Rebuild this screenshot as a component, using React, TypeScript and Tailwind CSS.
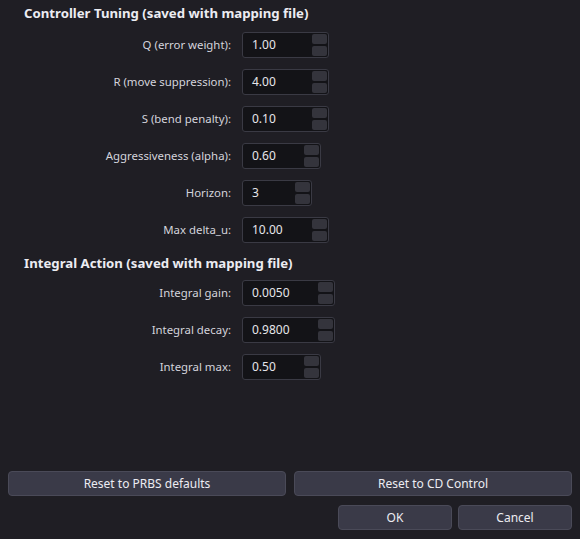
import React from 'react';

type Field = { label: string; value: string; width: string };

const tuningFields: Field[] = [
  { label: 'Q (error weight):', value: '1.00', width: 'w-[87px]' },
  { label: 'R (move suppression):', value: '4.00', width: 'w-[87px]' },
  { label: 'S (bend penalty):', value: '0.10', width: 'w-[87px]' },
  { label: 'Aggressiveness (alpha):', value: '0.60', width: 'w-[79px]' },
  { label: 'Horizon:', value: '3', width: 'w-[70px]' },
  { label: 'Max delta_u:', value: '10.00', width: 'w-[87px]' },
];

const integralFields: Field[] = [
  { label: 'Integral gain:', value: '0.0050', width: 'w-[93px]' },
  { label: 'Integral decay:', value: '0.9800', width: 'w-[93px]' },
  { label: 'Integral max:', value: '0.50', width: 'w-[79px]' },
];

function SpinBox({ value, width }: { value: string; width: string }) {
  return (
    <div className={`${width} h-[26px] flex rounded-[3px] border border-[#3a3a44] bg-[#131317]`}>
      <div className="flex-1 flex items-center pl-[9px] text-[12px] text-[#e6e6ea]">{value}</div>
      <div className="w-[15px] mr-[1px] py-[1px] flex flex-col gap-[2px]">
        <div className="flex-1 rounded-[2px] bg-[#34343c]" />
        <div className="flex-1 rounded-[2px] bg-[#34343c]" />
      </div>
    </div>
  );
}

function FormRow({ field }: { field: Field }) {
  return (
    <div className="flex items-center h-[26px]">
      <div className="w-[232px] text-right text-[11.4px] text-[#d4d4dc] pr-[1px]">{field.label}</div>
      <div className="ml-[10px]">
        <SpinBox value={field.value} width={field.width} />
      </div>
    </div>
  );
}

function DialogButton({ children, className = '' }: { children: React.ReactNode; className?: string }) {
  return (
    <button className={`h-[25px] rounded-[4px] border border-[#4a4a58] bg-[#3a3a48] text-[12px] text-[#ececf2] ${className}`}>
      {children}
    </button>
  );
}

export default function App() {
  return (
    <div
      className="w-[580px] h-[539px] bg-[#1f1e24] flex flex-col"
      style={{ fontFamily: '"Noto Sans", "Open Sans", sans-serif' }}
    >
      <div className="flex flex-col">
        {/* Controller tuning */}
        <h2 className="h-[28px] pl-[24px] pt-[3px] text-[13.2px] font-bold text-[#ececf2] leading-[20px]">
          Controller Tuning (saved with mapping file)
        </h2>
        <div className="mt-[4px] flex flex-col gap-[11px]">
          {tuningFields.map((f) => (
            <FormRow key={f.label} field={f} />
          ))}
        </div>

        {/* Integral action */}
        <h2 className="mt-[10px] h-[20px] pl-[24px] text-[13.2px] font-bold text-[#ececf2] leading-[20px]">
          Integral Action (saved with mapping file)
        </h2>
        <div className="mt-[7px] flex flex-col gap-[11px]">
          {integralFields.map((f) => (
            <FormRow key={f.label} field={f} />
          ))}
        </div>
      </div>

      <div className="flex-1" />

      {/* Dialog buttons */}
      <div className="px-[8px] pb-[9px] flex flex-col gap-[9px]">
        <div className="flex gap-[8px]">
          <DialogButton className="flex-1">Reset to PRBS defaults</DialogButton>
          <DialogButton className="flex-1">Reset to CD Control</DialogButton>
        </div>
        <div className="flex justify-end gap-[6px]">
          <DialogButton className="w-[114px]">OK</DialogButton>
          <DialogButton className="w-[114px]">Cancel</DialogButton>
        </div>
      </div>
    </div>
  );
}
